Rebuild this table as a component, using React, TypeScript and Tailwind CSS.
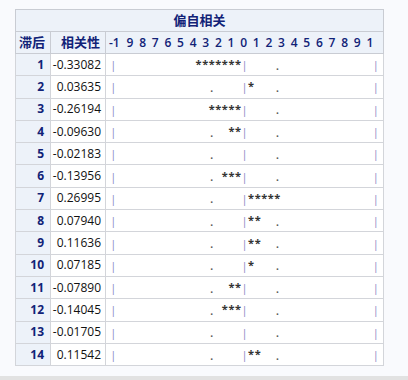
import React from "react";

const rows: [number, string][] = [
  [1, "-0.33082"],
  [2, "0.03635"],
  [3, "-0.26194"],
  [4, "-0.09630"],
  [5, "-0.02183"],
  [6, "-0.13956"],
  [7, "0.26995"],
  [8, "0.07940"],
  [9, "0.11636"],
  [10, "0.07185"],
  [11, "-0.07890"],
  [12, "-0.14045"],
  [13, "-0.01705"],
  [14, "0.11542"],
];

const labels = ["-1", "9", "8", "7", "6", "5", "4", "3", "2", "1", "0", "1", "2", "3", "4", "5", "6", "7", "8", "9", "1"];

function graphChars(v: number): string[] {
  const c: string[] = Array(41).fill(" ");
  c[0] = "|";
  c[40] = "|";
  c[15] = ".";
  c[25] = ".";
  c[20] = "|";
  const n = Math.round(Math.abs(v) * 20);
  for (let i = 1; i <= n; i++) {
    if (v < 0) c[20 - i] = "*";
    else c[20 + i] = "*";
  }
  return c;
}

function GraphCell({ ch }: { ch: string }) {
  if (ch === "|")
    return <span className="w-[6.57px] shrink-0 flex justify-center text-[11px] leading-none text-[#8a88c4]">|</span>;
  if (ch === "*")
    return <span className="w-[6.57px] shrink-0 flex justify-center text-[11px] leading-none font-bold text-[#333333] -translate-y-[1px]">*</span>;
  if (ch === ".")
    return <span className="w-[6.57px] shrink-0 flex justify-center text-[10px] leading-none font-bold text-[#555555] translate-y-[1px]">.</span>;
  return <span className="w-[6.57px] shrink-0"> </span>;
}

export default function App() {
  return (
    <div
      className="w-[408px] h-[380px] bg-[#f9fafd] flex flex-col"
      style={{ fontFamily: '"Open Sans", "Noto Sans CJK SC", sans-serif' }}
    >
      <div className="flex-1 pt-[9px] pl-[15px]">
        <table className="border-collapse table-fixed w-[369px] border border-[#c9ccd3] bg-white">
          <colgroup>
            <col className="w-[35px]" />
            <col className="w-[55px]" />
            <col />
          </colgroup>
          <thead>
            <tr className="h-[22px]">
              <th
                colSpan={3}
                className="p-0 bg-[#edf2f9] border border-[#c9ccd3] text-center text-[13px] font-bold text-[#112277] align-middle"
              >
                偏自相关
              </th>
            </tr>
            <tr className="h-[22px]">
              <th className="p-0 pr-[5px] bg-[#edf2f9] border border-[#c9ccd3] text-right text-[13px] font-bold text-[#112277] align-middle">
                滞后
              </th>
              <th className="p-0 pr-[5px] bg-[#edf2f9] border border-[#c9ccd3] text-right text-[13px] font-bold text-[#112277] align-middle">
                相关性
              </th>
              <th className="p-0 pl-[5px] bg-[#edf2f9] border border-[#c9ccd3] align-middle">
                <div className="flex items-center text-[12px] font-semibold text-[#112277] leading-none">
                  {labels.map((l, i) => (
                    <span
                      key={i}
                      className={
                        i === 0
                          ? "w-[12.64px] shrink-0 flex justify-end pr-[4px]"
                          : "w-[12.64px] shrink-0 flex justify-center"
                      }
                    >
                      {l}
                    </span>
                  ))}
                </div>
              </th>
            </tr>
          </thead>
          <tbody>
            {rows.map(([lag, val]) => (
              <tr key={lag} className="h-[22.3px]">
                <th className="p-0 pr-[6px] bg-[#edf2f9] border border-[#d3d5da] text-right text-[12px] font-bold text-[#112277] align-middle">
                  {lag}
                </th>
                <td className="p-0 pr-[4px] border border-[#d3d5da] text-right text-[12px] text-[#111111] align-middle">
                  {val}
                </td>
                <td className="p-0 pl-[4px] border border-[#d3d5da] align-middle">
                  <div className="flex items-center h-[14px]">
                    {graphChars(parseFloat(val)).map((ch, i) => (
                      <GraphCell key={i} ch={ch} />
                    ))}
                  </div>
                </td>
              </tr>
            ))}
          </tbody>
        </table>
      </div>
      <div className="h-[4px] bg-[#e2e2e2]" />
    </div>
  );
}
